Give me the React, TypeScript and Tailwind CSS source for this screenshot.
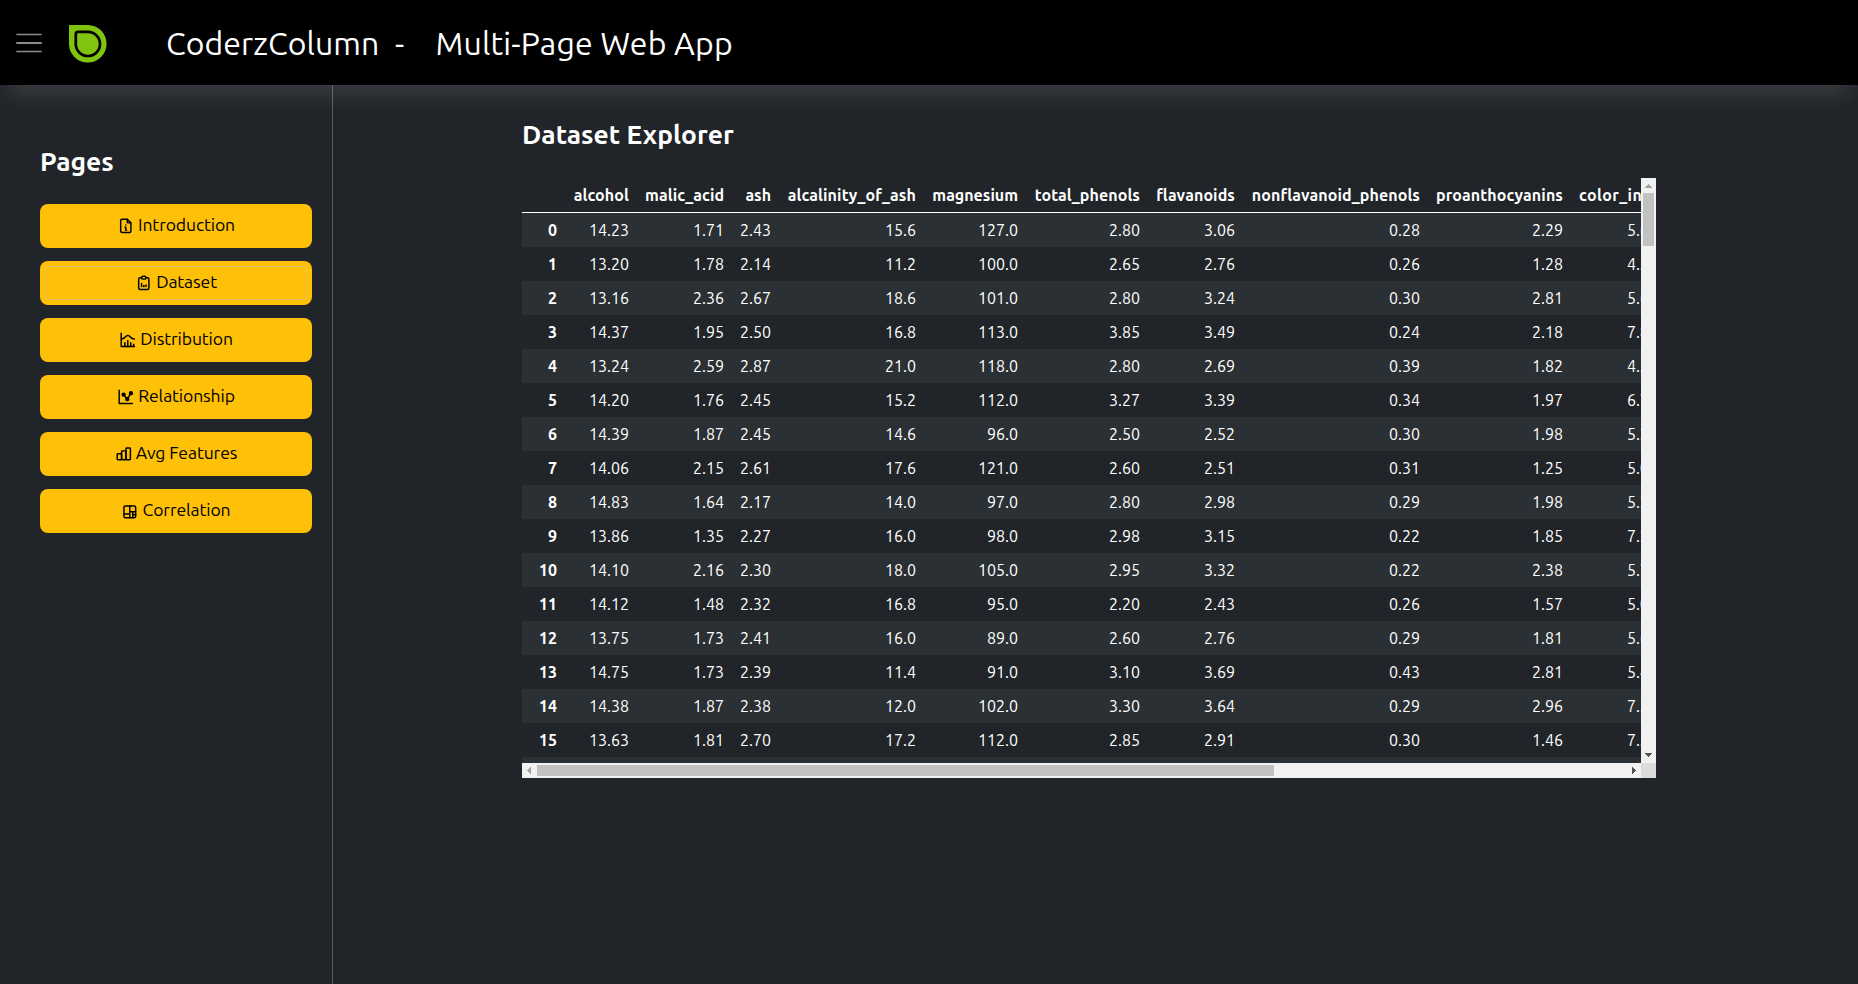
import React from "react";
import type { ReactNode } from "react";
import { TbChartHistogram, TbClipboardData, TbFileInfo } from "react-icons/tb";

const strokeProps = {
  width: 17.6,
  height: 17.6,
  viewBox: "0 0 24 24",
  fill: "none",
  stroke: "currentColor",
  strokeWidth: 2,
  strokeLinecap: "round" as const,
  strokeLinejoin: "round" as const,
};

function DotsIcon() {
  return (
    <svg {...strokeProps}>
      <path d="M3 3v18h18" />
      <circle cx="9" cy="9" r="2" fill="currentColor" />
      <circle cx="19" cy="7" r="2" fill="currentColor" />
      <circle cx="14" cy="15" r="2" fill="currentColor" />
      <path d="M10.16 10.62l2.34 2.88M15.088 13.328l2.837-4.586" />
    </svg>
  );
}

function BarsIcon() {
  return (
    <svg {...strokeProps}>
      <rect x="3" y="12" width="6" height="8" rx="1" />
      <rect x="9" y="8" width="6" height="12" rx="1" />
      <rect x="15" y="4" width="6" height="16" rx="1" />
    </svg>
  );
}

function TreemapIcon() {
  return (
    <svg {...strokeProps}>
      <rect x="4" y="4" width="16" height="16" rx="2" />
      <path d="M12 4v16M4 15h8M12 12h8M16 12v8M16 16h4" />
    </svg>
  );
}

type Page = { label: string; icon: ReactNode; focused?: boolean };

const pages: Page[] = [
  { label: "Introduction", icon: <TbFileInfo size={17.6} /> },
  { label: "Dataset", icon: <TbClipboardData size={17.6} />, focused: true },
  { label: "Distribution", icon: <TbChartHistogram size={17.6} /> },
  { label: "Relationship", icon: <DotsIcon /> },
  { label: "Avg Features", icon: <BarsIcon /> },
  { label: "Correlation", icon: <TreemapIcon /> },
];

const columns = [
  { name: "", width: "w-[43px]" },
  { name: "alcohol", width: "w-[72px] tracking-[0.1px]" },
  { name: "malic_acid", width: "w-[95px] tracking-[0.1px]" },
  { name: "ash", width: "w-[47px]" },
  { name: "alcalinity_of_ash", width: "w-[145px] tracking-[0.12px]" },
  { name: "magnesium", width: "w-[102px]" },
  { name: "total_phenols", width: "w-[122px] tracking-[0.1px]" },
  { name: "flavanoids", width: "w-[95px] tracking-[0.1px]" },
  { name: "nonflavanoid_phenols", width: "w-[185px] tracking-[0.1px]" },
  { name: "proanthocyanins", width: "w-[143px] tracking-[0.1px]" },
  { name: "color_intensity", width: "w-[131px] text-left tracking-[0.4px]" },
];

const rows = [
  ["14.23", "1.71", "2.43", "15.6", "127.0", "2.80", "3.06", "0.28", "2.29", "5.640000"],
  ["13.20", "1.78", "2.14", "11.2", "100.0", "2.65", "2.76", "0.26", "1.28", "4.380000"],
  ["13.16", "2.36", "2.67", "18.6", "101.0", "2.80", "3.24", "0.30", "2.81", "5.680000"],
  ["14.37", "1.95", "2.50", "16.8", "113.0", "3.85", "3.49", "0.24", "2.18", "7.800000"],
  ["13.24", "2.59", "2.87", "21.0", "118.0", "2.80", "2.69", "0.39", "1.82", "4.320000"],
  ["14.20", "1.76", "2.45", "15.2", "112.0", "3.27", "3.39", "0.34", "1.97", "6.750000"],
  ["14.39", "1.87", "2.45", "14.6", "96.0", "2.50", "2.52", "0.30", "1.98", "5.250000"],
  ["14.06", "2.15", "2.61", "17.6", "121.0", "2.60", "2.51", "0.31", "1.25", "5.050000"],
  ["14.83", "1.64", "2.17", "14.0", "97.0", "2.80", "2.98", "0.29", "1.98", "5.200000"],
  ["13.86", "1.35", "2.27", "16.0", "98.0", "2.98", "3.15", "0.22", "1.85", "7.220000"],
  ["14.10", "2.16", "2.30", "18.0", "105.0", "2.95", "3.32", "0.22", "2.38", "5.750000"],
  ["14.12", "1.48", "2.32", "16.8", "95.0", "2.20", "2.43", "0.26", "1.57", "5.000000"],
  ["13.75", "1.73", "2.41", "16.0", "89.0", "2.60", "2.76", "0.29", "1.81", "5.600000"],
  ["14.75", "1.73", "2.39", "11.4", "91.0", "3.10", "3.69", "0.43", "2.81", "5.400000"],
  ["14.38", "1.87", "2.38", "12.0", "102.0", "3.30", "3.64", "0.29", "2.96", "7.500000"],
  ["13.63", "1.81", "2.70", "17.2", "112.0", "2.85", "2.91", "0.30", "1.46", "7.300000"],
  ["", "", "", "", "", "", "", "", "", ""],
];

function Header() {
  return (
    <header className="relative z-10 flex h-[85px] shrink-0 items-center bg-black pl-4 text-[32px] text-white shadow-[0_20px_20px_-10px_rgba(255,255,255,0.11)]">
      <svg className="mt-px shrink-0" width="26" height="20" viewBox="0 0 26 20" stroke="#8c8c8c" strokeLinecap="round">
        <path d="M1 1.5h24M1 18.5h24" strokeWidth="1.6" />
        <path d="M1 10h24" strokeWidth="2" />
      </svg>
      <svg className="ml-[27px] mt-[2px] shrink-0" width="38" height="38" viewBox="0 0 38 38">
        <path d="M0 0H19A18.8 18.8 0 1 1 0 19Z" fill="#80c410" />
        <path d="M9 6.8H18.9A12.1 12.1 0 1 1 6.8 18.9V9Q6.8 6.8 9 6.8Z" fill="none" stroke="#000" strokeWidth="2.7" />
      </svg>
      <span className="ml-[59px] w-[229px] whitespace-nowrap pt-px tracking-[0.07px]">CoderzColumn</span>
      <span className="w-[40.5px] pt-px">-</span>
      <span className="whitespace-nowrap pt-px tracking-[0.2px]">Multi-Page Web App</span>
    </header>
  );
}

function Sidebar() {
  return (
    <aside className="w-[333px] shrink-0 border-r border-[#5a5d60] pl-10 pr-5 pt-[56px]">
      <h3 className="h-[62.85px] text-[26.4px] font-bold leading-10 text-white">Pages</h3>
      <nav className="flex flex-col gap-[13.45px]">
        {pages.map((page) => (
          <button
            key={page.label}
            className={`flex h-[43.7px] items-center justify-center gap-[3.5px] rounded-lg bg-[#ffc107] text-[17.6px] tracking-[-0.12px] text-black ${
              page.focused ? "outline-1 -outline-offset-6 outline-dotted outline-[#c8c8c8]" : ""
            }`}
          >
            <span>{page.icon}</span>
            <span className="pb-[1.4px]">{page.label}</span>
          </button>
        ))}
      </nav>
    </aside>
  );
}

function DataTable() {
  return (
    <div className="h-[585px] w-[1119px] overflow-hidden">
      <table className="w-[1180px] table-fixed border-collapse whitespace-nowrap text-right text-base leading-6 text-white">
        <thead>
          <tr className="h-[35px] shadow-[inset_0_-1px_0_#fff]">
            {columns.map((col) => (
              <th key={col.name} className={`px-2 pb-[2px] pt-0 font-bold ${col.width}`}>
                {col.name}
              </th>
            ))}
          </tr>
        </thead>
        <tbody>
          {rows.map((row, i) => (
            <tr key={i} className="h-[34px] odd:bg-[#2b3034]">
              <th className="px-2 py-0 font-bold">{i < 16 ? i : ""}</th>
              {row.map((value, j) => (
                <td key={j} className="px-2 py-0">
                  {value}
                </td>
              ))}
            </tr>
          ))}
        </tbody>
      </table>
    </div>
  );
}

function VerticalBar() {
  return (
    <div className="flex h-[585px] w-[15px] flex-col items-center justify-between bg-[#f1f1f1]">
      <div className="flex flex-col items-center">
        <svg width="15" height="15" shapeRendering="crispEdges">
          <path d="M7 6h1v1h1v1h1v1h1v1H4V9h1V8h1V7h1z" fill="#a3a3a3" />
        </svg>
        <div className="h-[53px] w-[11px] bg-[#c1c1c1]" />
      </div>
      <svg width="15" height="15" shapeRendering="crispEdges">
        <path d="M4 5h7v1h-1v1H9v1H8v1H7V8H6V7H5V6H4z" fill="#505050" />
      </svg>
    </div>
  );
}

function HorizontalBar() {
  return (
    <div className="flex h-[15px] w-[1119px] items-center justify-between bg-[#f1f1f1]">
      <div className="flex items-center">
        <svg width="15" height="15" shapeRendering="crispEdges">
          <path d="M9 4v7H8v-1H7V9H6V8H5V7h1V6h1V5h1V4z" fill="#a3a3a3" />
        </svg>
        <div className="h-[11px] w-[737px] bg-[#c1c1c1]" />
      </div>
      <svg width="15" height="15" shapeRendering="crispEdges">
        <path d="M6 4h1v1h1v1h1v1h1v1H9v1H8v1H7v1H6z" fill="#505050" />
      </svg>
    </div>
  );
}

export default function App() {
  return (
    <div className="flex h-screen flex-col overflow-hidden bg-[#212529] font-['Ubuntu','Noto_Sans',sans-serif]">
      <Header />
      <div className="flex min-h-0 flex-1">
        <Sidebar />
        <main className="pl-[189px] pt-[29px]">
          <h3 className="mb-6 text-[26.4px] font-bold leading-10 tracking-[0.05px] text-white">Dataset Explorer</h3>
          <div className="grid grid-cols-[1119px_15px]">
            <DataTable />
            <VerticalBar />
            <HorizontalBar />
            <div className="bg-[#dcdcdc]" />
          </div>
        </main>
      </div>
    </div>
  );
}
